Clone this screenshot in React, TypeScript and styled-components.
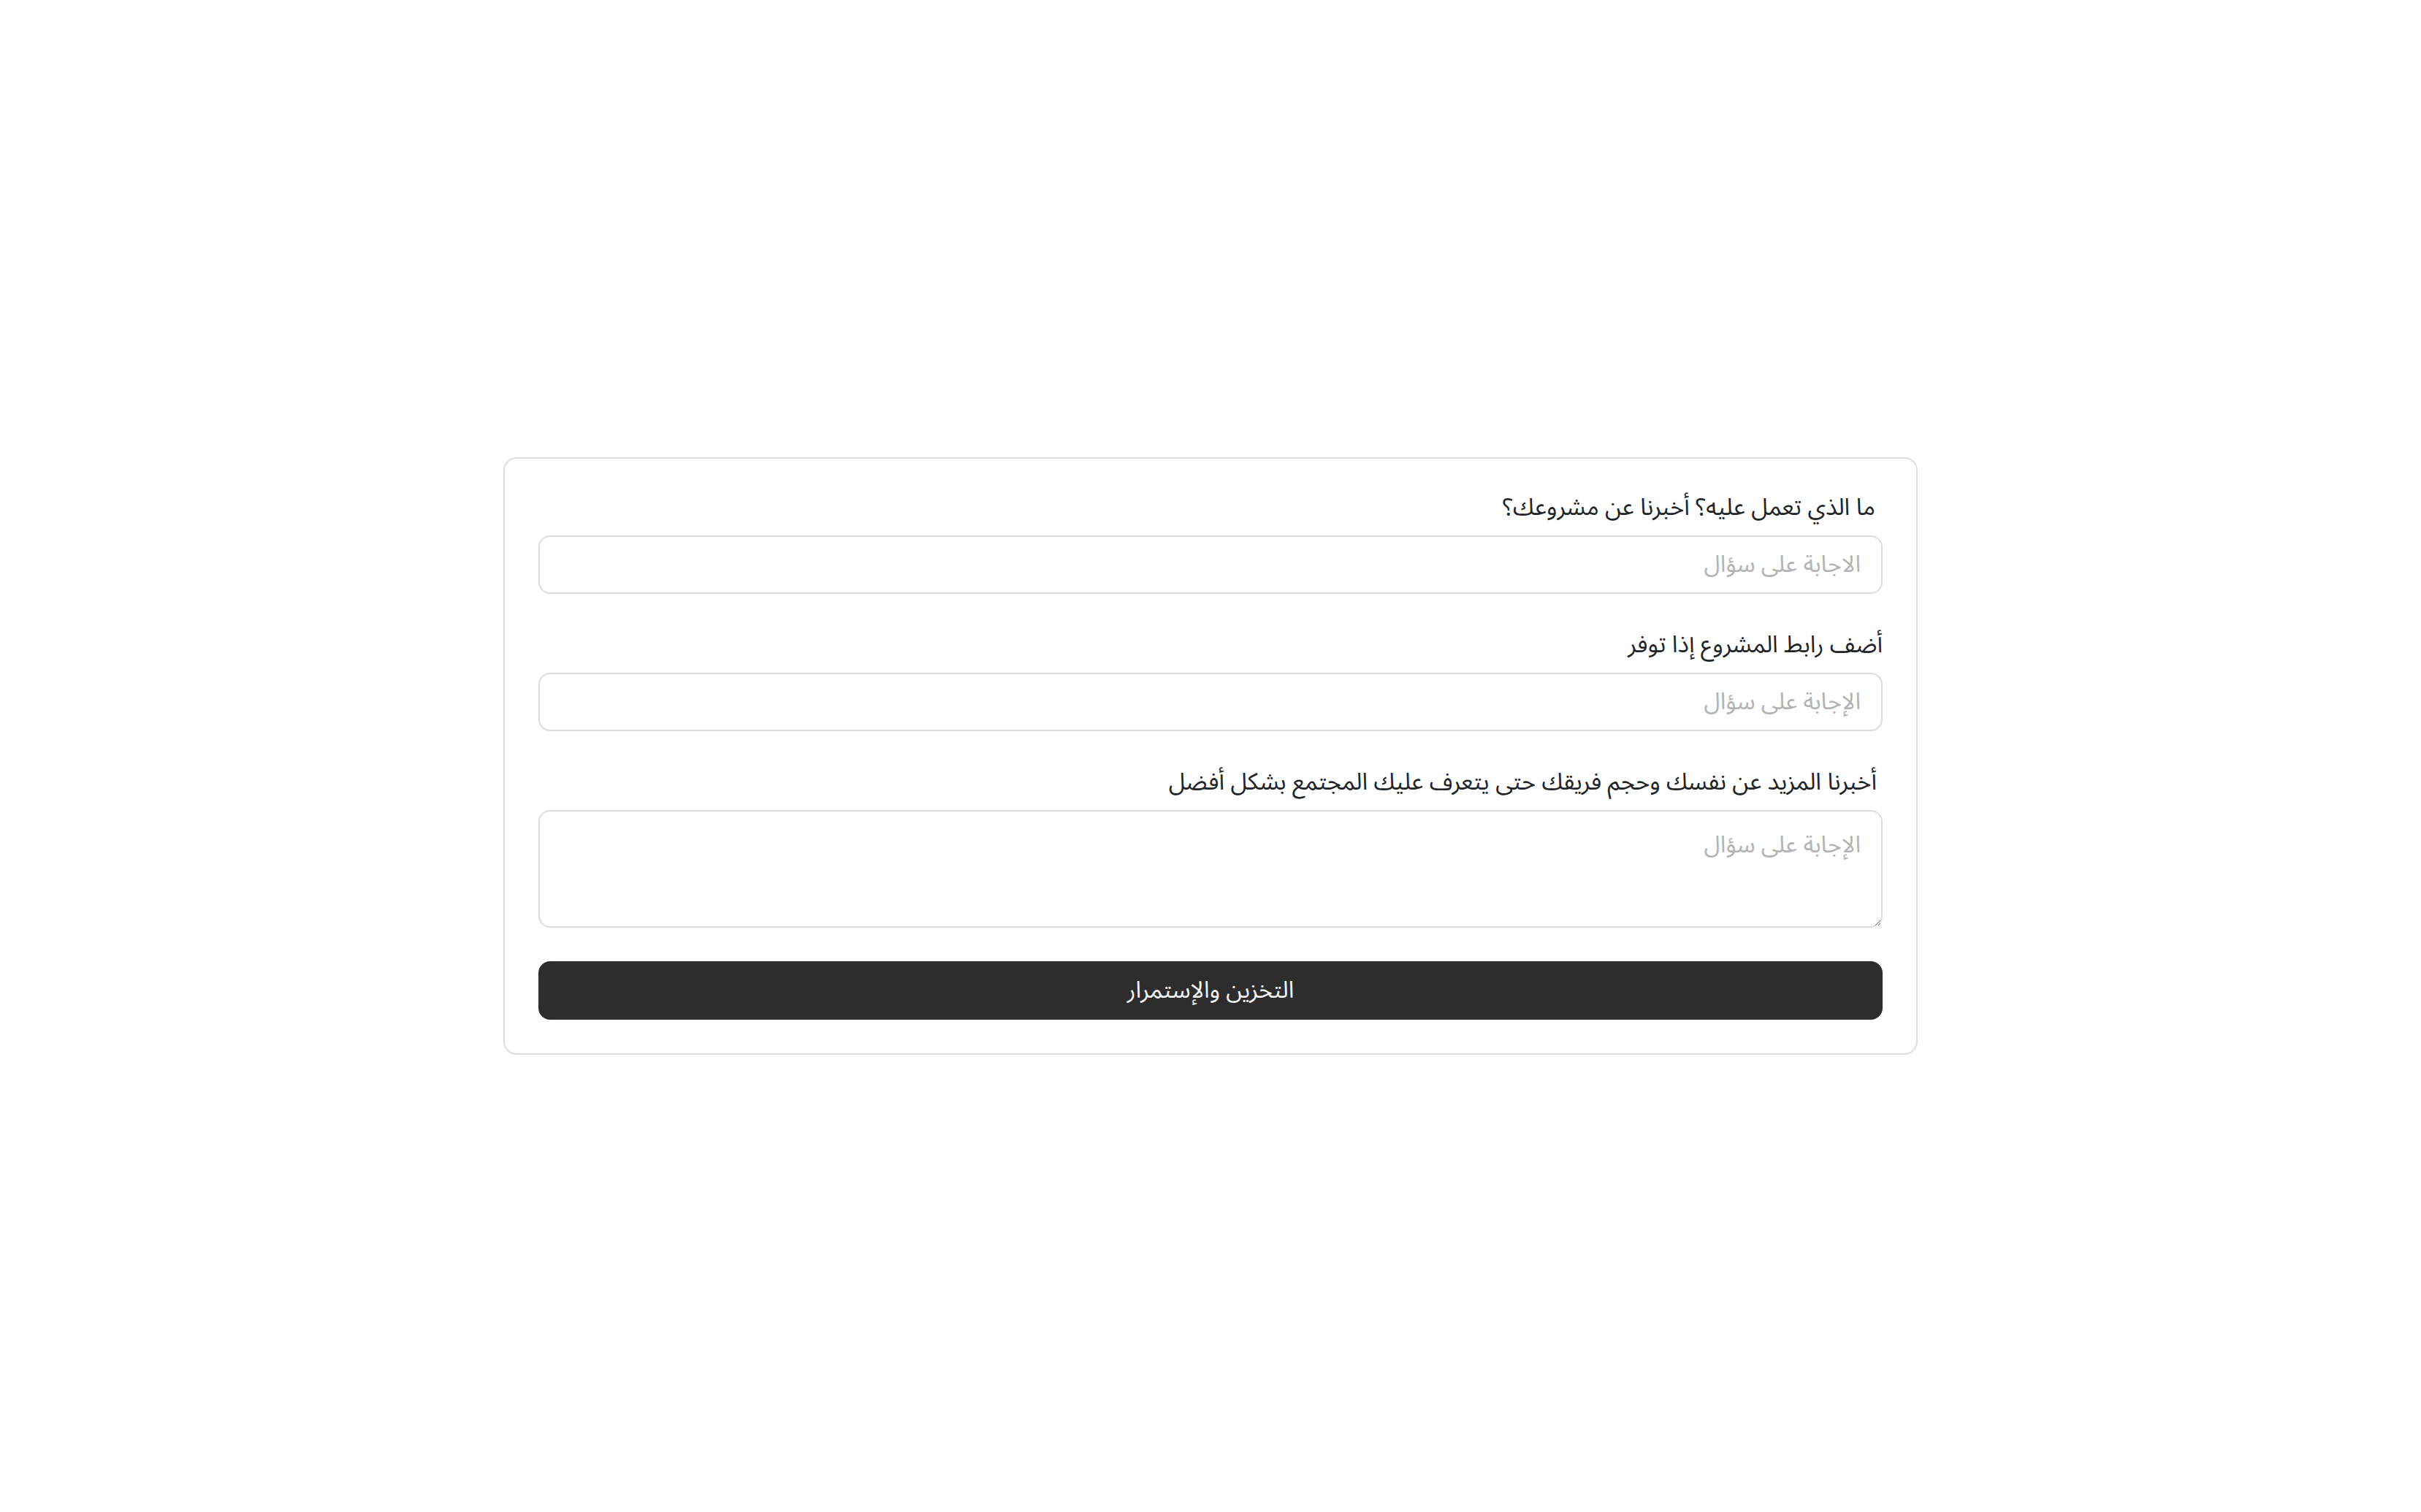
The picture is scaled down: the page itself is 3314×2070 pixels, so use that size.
import { createGlobalStyle } from "styled-components";
import styled from "styled-components";

const GlobalStyle = createGlobalStyle`
  html, body {
    margin: 0;
    padding: 0;
    height: 100%;
    background-color: #ffffff;
  }
  #root {
    height: 100%;
  }
`;

const Page = styled.div`
  display: flex;
  width: 100%;
  min-height: 100vh;
  align-items: center;
  justify-content: center;
  font-family: "Noto Sans Arabic", "Noto Sans", sans-serif;
  box-sizing: border-box;
`;

const Card = styled.form`
  width: 1936px;
  box-sizing: border-box;
  padding: 43px 46px 46px;
  border: 2px solid #dedede;
  border-radius: 18px;
  background-color: #ffffff;
  display: flex;
  flex-direction: column;
  direction: rtl;
`;

const Field = styled.div`
  display: flex;
  flex-direction: column;
  margin-bottom: 46px;
`;

interface LabelProps {
  $indent?: number;
}

const Label = styled.label<LabelProps>`
  font-size: 32.3px;
  line-height: 48px;
  color: #212529;
  margin-bottom: 14px;
  padding-right: ${(props) => props.$indent ?? 0}px;
`;

const Input = styled.input`
  height: 80px;
  box-sizing: border-box;
  padding: 0 28px;
  border: 2px solid #dcdcdc;
  border-radius: 16px;
  font-family: inherit;
  font-size: 32px;
  color: #212529;
  background: #ffffff;
  outline: none;
  direction: ltr;
  text-align: right;
  &::placeholder {
    color: #b3b3b3;
  }
`;

const TextArea = styled.textarea`
  height: 161px;
  box-sizing: border-box;
  padding: 22px 28px;
  border: 2px solid #dcdcdc;
  border-radius: 16px;
  font-family: inherit;
  font-size: 32px;
  line-height: 48px;
  color: #212529;
  background: #ffffff;
  outline: none;
  direction: ltr;
  text-align: right;
  &::placeholder {
    color: #b3b3b3;
  }
`;

const SubmitButton = styled.button`
  height: 80px;
  border: none;
  border-radius: 16px;
  background-color: #2d2d2d;
  color: #f5f5f5;
  font-family: inherit;
  font-size: 32px;
  cursor: pointer;
`;

export default function App() {
  return (
    <>
      <GlobalStyle />
      <Page>
        <Card onSubmit={(e) => e.preventDefault()}>
          <Field>
            <Label $indent={10}>ما الذي تعمل عليه؟ أخبرنا عن مشروعك؟</Label>
            <Input placeholder="الاجابة على سؤال" />
          </Field>
          <Field>
            <Label>أضف رابط المشروع إذا توفر</Label>
            <Input placeholder="الإجابة على سؤال" />
          </Field>
          <Field>
            <Label $indent={8}>
              أخبرنا المزيد عن نفسك وحجم فريقك حتى يتعرف عليك المجتمع بشكل أفضل
            </Label>
            <TextArea placeholder="الإجابة على سؤال" />
          </Field>
          <SubmitButton type="submit">التخزين والإستمرار</SubmitButton>
        </Card>
      </Page>
    </>
  );
}
